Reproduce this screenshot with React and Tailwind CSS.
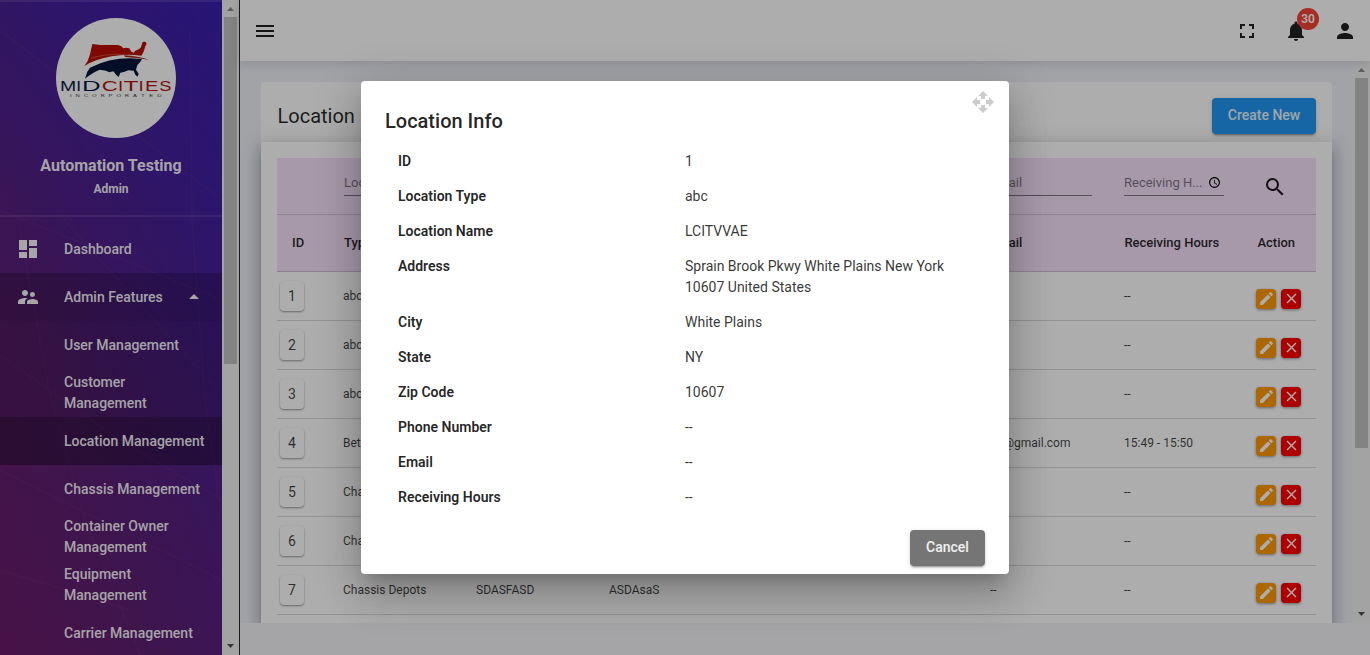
import {
  MdDashboard, MdSupervisorAccount, MdArrowDropUp, MdMenu, MdFullscreen, MdNotifications,
  MdPerson, MdSearch, MdAccessTime, MdModeEdit, MdClose,
} from 'react-icons/md';

const subItems = [
  { label: 'User Management' },
  { label: 'Customer Management' },
  { label: 'Location Management', active: true },
  { label: 'Chassis Management' },
  { label: 'Container Owner Management' },
  { label: 'Equipment Management' },
  { label: 'Carrier Management' },
];

const rows = [
  { id: 1, type: 'abc', hours: '--' },
  { id: 2, type: 'abc', hours: '--' },
  { id: 3, type: 'abc', hours: '--' },
  { id: 4, type: 'Beta', email: 'ab@gmail.com', hours: '15:49 - 15:50' },
  { id: 5, type: 'Chassis', hours: '--' },
  { id: 6, type: 'Chassis', hours: '--' },
  { id: 7, type: 'Chassis Depots', name: 'SDASFASD', address: 'ASDAsaS', email: '--', hours: '--' },
];

const details = [
  ['ID', '1'],
  ['Location Type', 'abc'],
  ['Location Name', 'LCITVVAE'],
  ['Address', 'Sprain Brook Pkwy White Plains New York 10607 United States'],
  ['City', 'White Plains'],
  ['State', 'NY'],
  ['Zip Code', '10607'],
  ['Phone Number', '--'],
  ['Email', '--'],
  ['Receiving Hours', '--'],
];

const grid = 'grid grid-cols-[66px_133px_133px_381px_134px_133px_59px]';

// Wordmark letters: glyph, left edge, stretched width, fill
const wordmark = [
  ['M', 4, 16.2, '#081a4a'],
  ['I', 20.3, 4.8, '#081a4a'],
  ['D', 25.9, 18.6, '#081a4a'],
  ['C', 45.7, 16, '#b3160f'],
  ['I', 62, 5.2, '#b3160f'],
  ['T', 67.5, 15, '#b3160f'],
  ['I', 82.6, 5.2, '#b3160f'],
  ['E', 89.1, 13.4, '#b3160f'],
  ['S', 103.2, 12.2, '#b3160f'],
];

function Logo() {
  return (
    <svg viewBox="0 0 120 120" className="ml-[10px] h-[120px] w-[120px] shrink-0">
      <circle cx="60" cy="60" r="60" fill="#fff" />
      <g transform="translate(-6 17) scale(.3333)">
        <path
          d="M103 93 L113 78 L120 58 L127 27 L150 30 L204 30 L214 34 L220 40 L228 38 L238 40 L244 50 L251 53 L256 47 L266 43 L272 38 L275 30 L278 21 L286 20 L290 26 L285 36 L283 44 L279 54 L274 62 Q230 55 185 64 Q135 73 103 93 Z"
          fill="#bd0d04"
        />
        <path d="M122 70 Q165 56 225 58" fill="none" stroke="#dc8278" strokeWidth="1.500" />
        <path d="M222 61 Q265 63 296 74 Q262 68 225 66 Z" fill="#a8201a" />
        <path
          d="M105 131 L112 110 L120 98 Q175 70 240 70 L276 72 L270 82 L262 90 L258 104 L266 116 L263 125 L256 119 L251 107 L235 106 L222 111 L211 113 L206 126 L199 120 L190 109 L178 112 L168 107 L150 104 Q128 112 105 131 Z"
          fill="#061638"
        />
      </g>
      <g fontFamily="'Liberation Sans', sans-serif" fontSize="14">
        {wordmark.map(([ch, x, w, fill]) => (
          <text key={x} x={x} y="73" textLength={w} lengthAdjust="spacingAndGlyphs" fill={fill}>{ch}</text>
        ))}
      </g>
      <g transform="scale(1.4 1)" fontFamily="'Liberation Sans', sans-serif">
        <text x="10 14 20 25.800 31.700 37.500 43.300 49.100 55 60.800 66.600 72.400" y="79" fontSize="4.200" fill="#444">INCORPORATED</text>
      </g>
    </svg>
  );
}

function Triangle({ up, color }) {
  return (
    <svg viewBox="0 0 7 4" className={`h-1 w-[7px] ${color}`} fill="currentColor">
      <path d={up ? 'M3.500 0 L7 4 H0 Z' : 'M0 0 H7 L3.500 4 Z'} />
    </svg>
  );
}

function ScrollBar({ thumb }) {
  return (
    <div className="flex w-[17px] shrink-0 flex-col items-center bg-[#f1f1f1]">
      <div className="flex h-[17px] items-center"><Triangle up color="text-[#8b8b8b]" /></div>
      <div className={`w-[13px] bg-[#c1c1c1] ${thumb}`} />
      <div className="mt-auto flex h-[18px] items-center"><Triangle color="text-[#505050]" /></div>
    </div>
  );
}

function Sidebar() {
  return (
    <aside className="flex w-60 shrink-0 bg-[#f1f1f1]">
      <div className="relative flex w-[222px] flex-col overflow-hidden bg-[linear-gradient(73deg,#681d6e_0%,#5a2078_38%,#4c2090_72%,#4020a4_100%)]">
        <div className="absolute inset-0 bg-[linear-gradient(25deg,rgba(115,22,80,0.15)_0%,rgba(80,30,110,0.08)_45%,rgba(50,30,185,0.5)_100%)]" />
        <svg viewBox="0 0 222 655" className="absolute inset-0 h-full w-full" fill="none" stroke="#a05090" strokeOpacity=".11" strokeWidth="1.500">
          <path d="M0 210 L222 300 M60 215 L222 395 M20 230 L50 395 L85 520 L140 655 M0 470 L222 580 M0 355 L120 440 L222 500 M190 30 L192 220 L205 400 L222 520 M0 570 L130 610 M0 30 L222 200" />
        </svg>
        <div className="relative h-0.5 shrink-0 bg-white/10" />
        <div className="relative flex h-[213px] shrink-0 flex-col items-center pt-4">
          <Logo />
          <p className="mt-4 text-base font-bold leading-6 text-white/95">Automation Testing</p>
          <p className="mt-[2px] text-xs font-bold leading-[18px] text-white/95">Admin</p>
        </div>
        <div className="relative h-0.5 shrink-0 bg-white/10" />
        <nav className="relative shrink-0 pt-2 text-sm font-medium leading-[21px] text-white/95">
          <div className="flex h-12 items-center pl-4">
            <MdDashboard className="h-6 w-6" />
            <span className="ml-6">Dashboard</span>
          </div>
          <div className="flex h-12 items-center bg-black/20 pl-4">
            <MdSupervisorAccount className="h-6 w-6" />
            <span className="ml-6">Admin Features</span>
            <MdArrowDropUp className="ml-[19px] h-6 w-6" />
          </div>
          {subItems.map((item, i) => (
            <div
              key={item.label}
              className={`flex h-12 items-center pl-16 pr-4 ${item.active ? 'bg-black/33' : i < 2 ? 'bg-black/15' : ''}`}
            >
              <span className={i === 5 || i === 1 ? 'w-[100px]' : 'w-[142px]'}>{item.label}</span>
            </div>
          ))}
        </nav>
      </div>
      <ScrollBar thumb="h-[347px]" />
      <div className="w-px bg-[#26262a]" />
    </aside>
  );
}

function TopBar() {
  return (
    <header className="relative z-10 flex h-[61px] shrink-0 items-center bg-white pl-[13px] pr-[13px] text-[#212121] shadow-[0_2px_10px_rgba(40,50,80,0.16)]">
      <MdMenu className="h-6 w-6" />
      <div className="ml-auto flex items-center gap-[25px]">
        <MdFullscreen className="h-6 w-6" />
        <div className="relative">
          <MdNotifications className="h-6 w-6" />
          <span className="absolute -top-[11px] left-[13px] flex h-[22px] w-[22px] items-center justify-center rounded-full bg-[#f44336] text-xs font-semibold text-white">30</span>
        </div>
        <MdPerson className="h-6 w-6" />
      </div>
    </header>
  );
}

function LocationTable() {
  return (
    <div className="mx-4 mt-4 text-xs text-black/75">
      <div className={`${grid} h-[57px] border-b border-black/15 bg-[#f7e1fb] text-[13px] text-black/50`}>
        <div />
        <div className="ml-px mr-8 mt-[14px] h-6 border-b border-black/50 leading-[22px]">Location</div>
        <div />
        <div />
        <div className="mr-8 mt-[14px] h-6 border-b border-black/50 leading-[22px]">Email</div>
        <div className="mr-[33px] mt-[14px] flex h-6 items-start border-b border-black/50 leading-[22px]">
          <span>Receiving H...</span>
          <MdAccessTime className="ml-auto mr-[3px] mt-[4px] h-[13px] w-[13px] text-black" />
        </div>
        <div className="pl-[6px] pt-[17px]"><MdSearch className="h-6 w-6 text-black/90" /></div>
      </div>
      <div className={`${grid} h-[57px] items-center border-b border-black/15 bg-[#f7e1fb] text-[13px] font-medium text-black/85`}>
        <div className="pl-[15px]">ID</div>
        <div className="pl-px">Type</div>
        <div />
        <div />
        <div>Email</div>
        <div className="pl-[0.4px]">Receiving Hours</div>
        <div className="pl-[0.4px]">Action</div>
      </div>
      {rows.map((r) => (
        <div key={r.id} className={`${grid} h-[49px] items-center border-b border-black/15`}>
          <div className="pl-[3px]">
            <span className="flex h-[30px] w-6 items-center justify-center rounded bg-white text-sm leading-5 shadow-[0_1px_2px_rgba(0,0,0,0.4)]">{r.id}</span>
          </div>
          <div>{r.type}</div>
          <div>{r.name}</div>
          <div>{r.address}</div>
          <div>{r.email}</div>
          <div>{r.hours}</div>
          <div className="-ml-px flex gap-[5px] pt-[5px] text-white">
            <span className="flex h-5 w-5 items-center justify-center rounded bg-[#ff9800] shadow-[0_1px_3px_rgba(0,0,0,0.4)]"><MdModeEdit className="h-[17px] w-[17px]" /></span>
            <span className="flex h-5 w-5 items-center justify-center rounded bg-[#ff0000] shadow-[0_1px_3px_rgba(0,0,0,0.4)]"><MdClose className="h-[17px] w-[17px]" /></span>
          </div>
        </div>
      ))}
    </div>
  );
}

function InfoDialog() {
  return (
    <div role="dialog" className="absolute left-[361px] top-[81px] flex h-[493px] w-[648px] flex-col rounded bg-white px-6 text-black/87 shadow-[0_11px_15px_-7px_rgba(0,0,0,0.2),0_24px_38px_3px_rgba(0,0,0,0.14),0_9px_46px_8px_rgba(0,0,0,0.12)]">
      <svg viewBox="0 0 24 24" className="absolute right-[14px] top-[9px] h-6 w-6" fill="#ccc">
        <path d="M10 9h4V6h3l-5-5-5 5h3v3zm-1 1H6V7l-5 5 5 5v-3h3v-4zm14 2l-5-5v3h-3v4h3v3l5-5zm-9 3h-4v3H7l5 5 5-5h-3v-3z" />
      </svg>
      <h2 className="mt-6 text-xl font-medium leading-8">Location Info</h2>
      <dl className="mt-[7px] text-sm leading-[21px]">
        {details.map(([label, value]) => (
          <div key={label} className="flex py-[7px] pl-[13px]">
            <dt className="w-[287px] font-semibold">{label}</dt>
            <dd className="w-[290px] text-black/80">{value}</dd>
          </div>
        ))}
      </dl>
      <button className="ml-auto mt-[15px] h-9 w-[75px] rounded bg-[#757575] pb-0.5 text-sm font-medium text-white/90 shadow-[0_3px_1px_-2px_rgba(0,0,0,0.2),0_2px_2px_rgba(0,0,0,0.14),0_1px_5px_rgba(0,0,0,0.12)]">Cancel</button>
    </div>
  );
}

export default function App() {
  return (
    <div className="relative flex h-[655px] w-[1370px] overflow-hidden bg-[#f3f4f7] font-[Roboto,sans-serif]">
      <Sidebar />
      <div className="flex min-w-0 flex-1 flex-col">
        <TopBar />
        <div className="flex h-[562px] overflow-hidden bg-[#eef0f6]">
          <main className="min-w-0 flex-1 overflow-hidden pl-[21px] pr-[21px] pt-[21px]">
            <section className="h-[60px] rounded-t-[3px] bg-white">
              <div className="flex h-[60px] items-start justify-between px-4 pt-4">
                <h1 className="pl-[0.5px] text-xl leading-9 text-black/85">Location</h1>
                <button className="h-9 w-[104px] rounded bg-[#2196f3] pb-0.5 text-sm font-medium text-white/90 shadow-[0_3px_1px_-2px_rgba(0,0,0,0.2),0_2px_2px_rgba(0,0,0,0.14),0_1px_5px_rgba(0,0,0,0.12)]">Create New</button>
              </div>
            </section>
            <section className="flow-root h-[560px] bg-white shadow-[0_5px_5px_-3px_rgba(0,0,0,0.2),0_8px_12px_1px_rgba(10,20,40,0.18),0_4px_18px_3px_rgba(10,20,40,0.16)]">
              <LocationTable />
            </section>
          </main>
          <ScrollBar thumb="h-[370px]" />
        </div>
      </div>
      <div className="absolute inset-0 z-20 bg-black/32" />
      <div className="absolute inset-0 z-30"><InfoDialog /></div>
    </div>
  );
}
